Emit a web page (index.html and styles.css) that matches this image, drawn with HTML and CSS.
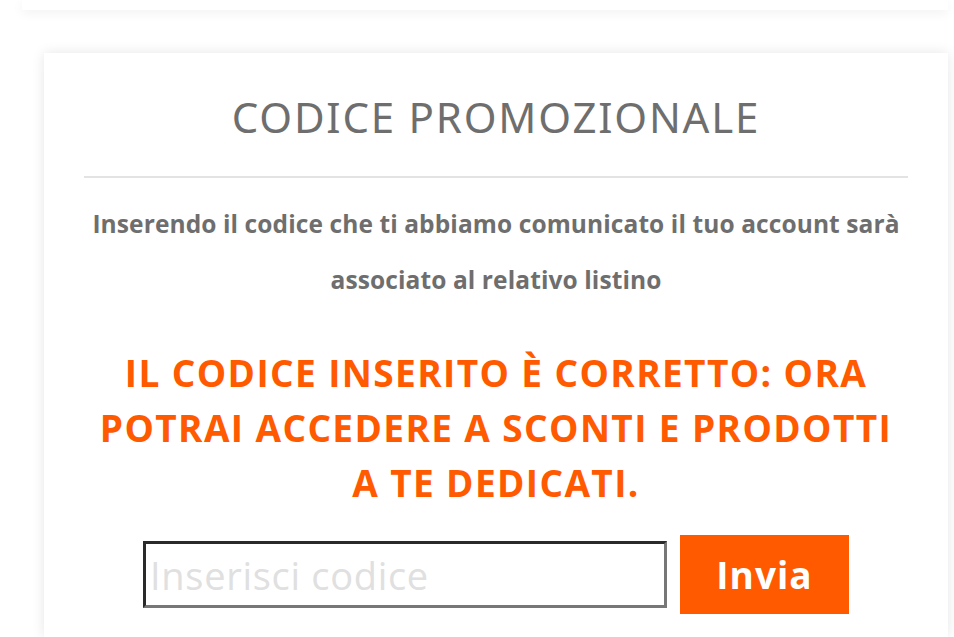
FILE: index.html
```html
<!DOCTYPE html>
<html lang="it">
<head>
  <meta charset="UTF-8">
  <title>Codice promozionale</title>
  <link rel="stylesheet" href="styles.css">
</head>
<body>
  <div class="topcard"></div>

  <div class="card">
    <h2 class="title">CODICE PROMOZIONALE</h2>
    <hr class="sep">
    <p class="intro">Inserendo il codice che ti abbiamo comunicato il tuo account sarà associato al relativo listino</p>

    <div class="success">IL CODICE INSERITO È CORRETTO: ORA POTRAI ACCEDERE A SCONTI E PRODOTTI A TE DEDICATI.</div>

    <form class="promo-form">
      <input type="text" class="code-input" placeholder="Inserisci codice">
      <button type="submit" class="send-btn">Invia</button>
    </form>
  </div>
</body>
</html>
```

FILE: styles.css
```css
body {
  margin: 0;
  background-color: #fff;
  font-family: "Open Sans", sans-serif;
  overflow: hidden;
}

.topcard {
  height: 10px;
  margin: 0 6px 0 22px;
  background-color: #fff;
  box-shadow: 0 3px 12px rgba(0, 0, 0, 0.06);
}

.card {
  width: 904px;
  min-height: 584px;
  margin: 43px 0 0 44px;
  padding: 36px 40px 0;
  box-sizing: border-box;
  background-color: #fff;
  box-shadow: 0 0 12px rgba(0, 0, 0, 0.1);
  text-align: center;
}

.title {
  margin: 0;
  font-family: "Noto Sans", sans-serif;
  font-weight: 400;
  font-size: 42px;
  line-height: 56px;
  letter-spacing: 1.8px;
  color: #6e6e6e;
}

.sep {
  margin: 31px 0 0;
  border: 0;
  border-top: 2px solid #e3e3e3;
}

.intro {
  margin: 18px 0 0;
  font-weight: 700;
  font-size: 24.5px;
  line-height: 56px;
  letter-spacing: 0.1px;
  color: #6e6e6e;
}

.success {
  margin: 37px 0 0;
  padding: 0 12px;
  font-weight: 700;
  font-size: 37px;
  line-height: 55px;
  letter-spacing: 1.4px;
  color: #ff5a00;
}

.promo-form {
  display: flex;
  justify-content: center;
  align-items: center;
  gap: 13px;
  margin-top: 25px;
}

.code-input {
  width: 524px;
  height: 67px;
  box-sizing: border-box;
  padding: 0 4px;
  border: 3px solid #777;
  border-top-color: #2a2a2a;
  border-left-color: #2a2a2a;
  font-family: "Open Sans", sans-serif;
  font-size: 38px;
  letter-spacing: 0.7px;
  color: #333;
}

.code-input::placeholder {
  color: #e0e0e0;
}

.send-btn {
  width: 169px;
  height: 79px;
  border: 0;
  background-color: #ff5a00;
  color: #fff;
  font-family: "Open Sans", sans-serif;
  font-weight: 700;
  font-size: 37px;
  letter-spacing: 1px;
  cursor: pointer;
}
```
